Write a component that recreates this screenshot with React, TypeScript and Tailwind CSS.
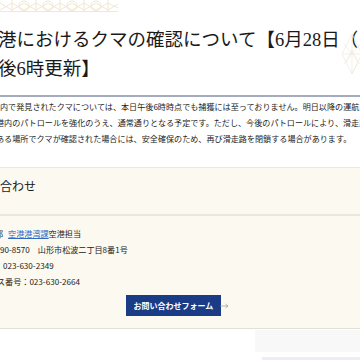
import React from 'react';

const sans = "font-['Noto_Sans_CJK_JP','Noto_Sans',sans-serif]";
const serif = "font-['Liberation_Serif','Noto_Sans_CJK_JP',serif]";

function TopPattern() {
  return (
    <svg width="120" height="12" viewBox="0 0 120 12" className="block">
      <g stroke="#eee2c8" strokeWidth="0.8" fill="none">
        <path d="M0 3 L12 10 L24 3 L36 10 L48 3 L60 10 L72 3 L84 10 L96 3 L108 10 L118 4" />
        <path d="M0 10 L12 3 L24 10 L36 3 L48 10 L60 3 L72 10 L84 3 L96 10 L108 3 L118 8" />
        <path d="M12 0 L12 12 M36 0 L36 12 M60 0 L60 12 M84 0 L84 12 M108 0 L108 12" />
        <circle cx="24" cy="6" r="5" />
        <circle cx="48" cy="6" r="5" />
        <circle cx="72" cy="6" r="5" />
        <circle cx="96" cy="6" r="5" />
        <path d="M0 11.5 H118" />
      </g>
    </svg>
  );
}

function SideDeco() {
  return (
    <svg width="20" height="80" viewBox="0 0 20 80" className="absolute right-0 top-[14px]">
      <g stroke="#efe9dc" strokeWidth="0.7" fill="none">
        <path d="M2 40 L12 20 L22 40 L12 60 Z" />
        <path d="M6 48 L12 36 L18 48 L12 60" />
        <path d="M12 20 V60 M2 40 H22" />
        <path d="M4 30 L20 50 M4 50 L20 30" />
      </g>
    </svg>
  );
}

export default function App() {
  return (
    <div className={`relative w-[360px] h-[360px] overflow-hidden bg-white text-[#222] ${sans}`}>
      <TopPattern />
      <SideDeco />

      <h1 className={`pt-[14px] -ml-[20.5px] text-[18.5px] leading-[29px] whitespace-nowrap text-[#1a1a1a] ${serif}`}>
        空港におけるクマの確認について【6月28日（
        <br />
        午後6時更新】
      </h1>
      <div className="mt-[11px] h-[2px] bg-[#a3abbc]" />

      <p className="pt-[2px] -ml-[4px] indent-[4px] text-[8.1px] leading-[16px] whitespace-nowrap text-[#222]">
        内で発見されたクマについては、本日午後6時時点でも捕獲には至っておりません。明日以降の運航は、
        <br />
        港内のパトロールを強化のうえ、通常通りとなる予定です。ただし、今後のパトロールにより、滑走路付近
        <br />
        ある場所でクマが確認された場合には、安全確保のため、再び滑走路を閉鎖する場合があります。
      </p>

      <section className="mt-[20px] border-t border-b border-t-[#ece8dd] border-b-[#e2dfd7] bg-[#fcf9f0] pb-[12px]">
        <h2 className={`pt-[9px] -ml-[36px] text-[12px] leading-[20px] whitespace-nowrap text-[#1a1a1a] ${serif}`}>
          お問い合わせ
        </h2>
        <div className="mt-[17px] h-[2px] bg-[#ebe7dc]" />

        <div className="mt-[10px] text-[8.1px] leading-[16px] whitespace-nowrap text-[#222]">
          <div className="-ml-[5px]">
            部<a className="ml-[5px] text-[#3367c4] underline">空港港湾課</a>空港担当
          </div>
          <div>90-8570　山形市松波二丁目8番1号</div>
          <div className="-ml-[5px]">：023-630-2349</div>
          <div className="-ml-[3px]">ス番号：023-630-2664</div>
        </div>

        <div className="mt-[5px] flex items-center pl-[126px]">
          <button className="h-[21px] w-[95px] bg-[#1a3c87] text-white text-[8px] font-bold leading-none">
            お問い合わせフォーム
          </button>
          <svg width="9" height="6" viewBox="0 0 9 6" className="-ml-[1px]">
            <path d="M0 3 H8 M5.5 1 L8 3 L5.5 5" stroke="#9a9a9a" strokeWidth="0.7" fill="none" />
          </svg>
        </div>
      </section>

      <div className="flex justify-end">
        <div className="mt-[1px] h-[22px] w-[105px] bg-[#f8f8f8]" />
      </div>
      <div className="flex justify-end">
        <div className="mt-[5px] h-[4px] w-[98px] bg-[#ededf8]" />
      </div>
    </div>
  );
}
